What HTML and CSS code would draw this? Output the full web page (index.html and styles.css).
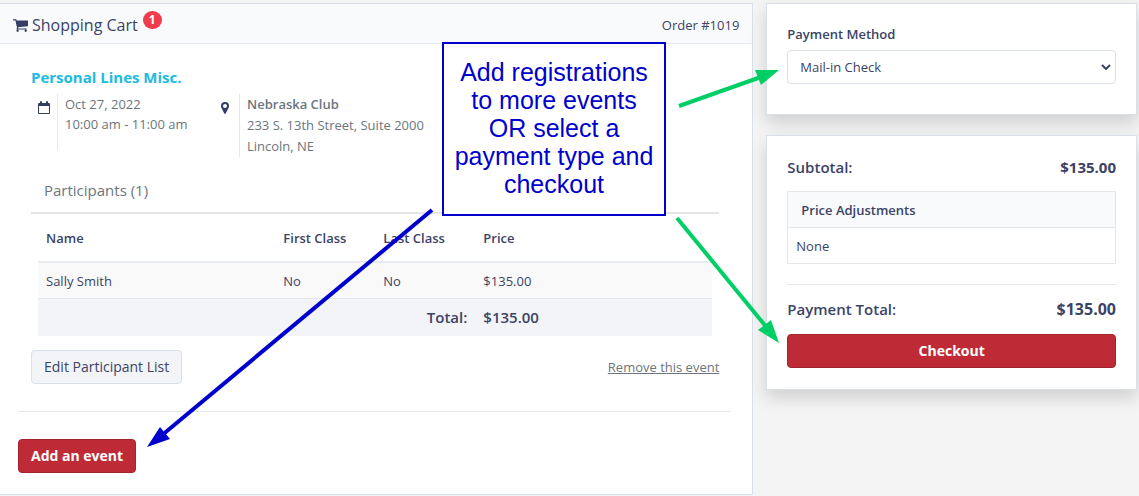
FILE: index.html
```html
<!DOCTYPE html>
<html lang="en">
<head>
  <meta charset="UTF-8" />
  <meta name="viewport" content="width=device-width, initial-scale=1.0" />
  <title>Shopping Cart</title>
  <link rel="stylesheet" href="styles.css">
</head>

<body>
  <div class="page">
    <main class="card cart">
      <header class="cart-header">
        <svg class="icon-cart" viewBox="0 0 1664 1536" aria-hidden="true">
          <path d="M640 1408q0 52-38 90t-90 38-90-38-38-90 38-90 90-38 90 38 38 90zm896 0q0 52-38 90t-90 38-90-38-38-90 38-90 90-38 90 38 38 90zm128-1088v512q0 24-16.500 42.500t-40.500 21.500l-1044 122q13 60 13 70 0 16-24 64h920q26 0 45 19t19 45-19 45-45 19H448q-26 0-45-19t-19-45q0-11 8-31.500t16-36 21.500-40T445 1080L268 256H64q-26 0-45-19T0 192t19-45 45-19h256q16 0 28.500 6.500T368 150t13 24.500 8 26 5.500 29.500 4.500 26h1201q26 0 45 19t19 45z"/>
        </svg>
        <h1>Shopping Cart</h1>
        <span class="badge">1</span>
        <span class="order">Order #1019</span>
      </header>

      <div class="cart-body">
        <section class="event">
          <h2>Personal Lines Misc.</h2>

          <div class="details">
            <div class="detail when">
              <svg class="icon-calendar" viewBox="0 0 12 13" aria-hidden="true">
                <path fill-rule="evenodd" d="M1 2h1V1q0-1 1-1t1 1v1h4V1q0-1 1-1t1 1v1h1q1 0 1 1v9q0 1-1 1H1q-1 0-1-1V3q0-1 1-1zM1 5v7h10V5z"/>
              </svg>
              <p>Oct 27, 2022<br>10:00 am - 11:00 am</p>
            </div>
            <div class="detail where">
              <svg class="icon-pin" viewBox="0 0 8 12" aria-hidden="true">
                <path fill-rule="evenodd" d="M4 0a4 4 0 0 1 4 4q0 1-.4 1.800L4.700 11.600q-.7.800-1.400 0L.4 5.800Q0 5 0 4a4 4 0 0 1 4-4zM4 2a2 2 0 1 0 0 4 2 2 0 0 0 0-4z"/>
              </svg>
              <p><strong>Nebraska Club</strong><br>233 S. 13th Street, Suite 2000<br>Lincoln, NE</p>
            </div>
          </div>

          <h3>Participants (1)</h3>

          <table class="participants">
            <thead>
              <tr>
                <th>Name</th>
                <th class="class-col">First Class</th>
                <th class="class-col">Last Class</th>
                <th class="price-col">Price</th>
              </tr>
            </thead>
            <tbody>
              <tr>
                <td>Sally Smith</td>
                <td>No</td>
                <td>No</td>
                <td>$135.00</td>
              </tr>
            </tbody>
            <tfoot>
              <tr>
                <td colspan="3" class="total-label">Total:</td>
                <td>$135.00</td>
              </tr>
            </tfoot>
          </table>

          <div class="event-actions">
            <button type="button" class="btn btn-light">Edit Participant List</button>
            <a href="#">Remove this event</a>
          </div>
        </section>

        <hr>
        <button type="button" class="btn btn-red">Add an event</button>
      </div>
    </main>

    <aside class="sidebar">
      <section class="card side-card payment">
        <label for="payment-method">Payment Method</label>
        <div class="select-wrap">
          <select id="payment-method">
            <option>Mail-in Check</option>
          </select>
          <svg class="icon-chevron" viewBox="0 0 10 6" aria-hidden="true">
            <path d="M1 1l4 4 4-4"/>
          </svg>
        </div>
      </section>

      <section class="card side-card summary">
        <div class="sum-row">
          <span>Subtotal:</span>
          <strong>$135.00</strong>
        </div>
        <table class="adjustments">
          <thead>
            <tr><th>Price Adjustments</th></tr>
          </thead>
          <tbody>
            <tr><td>None</td></tr>
          </tbody>
        </table>
        <hr>
        <div class="sum-row grand">
          <span>Payment Total:</span>
          <strong>$135.00</strong>
        </div>
        <button type="button" class="btn btn-red btn-block">Checkout</button>
      </section>
    </aside>

    <!-- help callout and arrows drawn over the page -->
    <svg class="arrows" width="1139" height="496" viewBox="0 0 1139 496" aria-hidden="true">
      <g class="arrow-blue">
        <path d="M432 210L161 436"/>
        <polygon points="147,447 160,427 170,439"/>
      </g>
      <g class="arrow-green">
        <path d="M679 106L761 77"/>
        <polygon points="779,70 755,70 761,85"/>
        <path d="M677 218L768 329"/>
        <polygon points="779,343 771,320 758,330"/>
      </g>
    </svg>
    <p class="callout">Add registrations to more events OR select a payment type and checkout</p>
  </div>
</body>
</html>
```

FILE: styles.css
```css
* {
  box-sizing: border-box;
}
body {
  margin: 0;
  background: #f4f4f4;
  color: #3b4366;
  font-family: "Open Sans", sans-serif;
  font-size: 13px;
  line-height: 20px;
}
h1, h2, h3, p {
  margin: 0;
}
svg {
  display: block;
  fill: #353d63;
}
hr {
  margin: 0;
  border: 0;
  border-top: 1px solid #e4e7ea;
}
table {
  border-collapse: collapse;
}
th {
  font-weight: 600;
  text-align: left;
}

.page {
  position: relative;
  display: flex;
  align-items: flex-start;
  gap: 13px;
  padding: 3px 2px 0 0;
}
.card {
  background: #fff;
  border: 1px solid #d9e0e8;
}

/* cart */
.cart {
  flex: 753;
  border-left: 0;
}
.cart-header {
  display: flex;
  align-items: center;
  height: 40px;
  padding: 2px 13px 0;
  background: #f9fafc;
  border-bottom: 1px solid #e8ebf2;
}
.icon-cart {
  width: 15px;
  height: 14px;
  margin-right: 4px;
}
.cart-header h1 {
  font-size: 16px;
  font-weight: 400;
}
.badge {
  width: 19px;
  height: 18px;
  margin: 0 auto 10px 5px;
  border-radius: 9px;
  background: #ef3d4d;
  color: #fff;
  font-size: 12px;
  font-weight: 700;
  line-height: 18px;
  text-align: center;
}
.cart-body {
  padding: 22px 21px 21px 18px;
}
.event {
  padding: 0 12px 27px 13px;
}
.event h2 {
  color: #20bbe0;
  font-size: 15px;
  font-weight: 700;
  line-height: 22px;
}
.details {
  display: flex;
  align-items: flex-start;
  margin-top: 6px;
  color: #6c757d;
  line-height: 21px;
}
.detail {
  display: flex;
  align-items: flex-start;
}
.detail p {
  padding-left: 7px;
  border-left: 1px solid #e4e6ea;
}
.detail strong {
  font-weight: 600;
}
.when {
  width: 190px;
  padding-left: 7px;
}
.when p {
  min-height: 56px;
  line-height: 20px;
}
.icon-calendar {
  width: 12px;
  height: 13px;
  margin: 7px 7px 0 0;
}
.icon-pin {
  width: 8px;
  height: 12px;
  margin: 8px 10px 0 0;
}
.event h3 {
  margin-top: 20px;
  padding: 3px 13px 12px;
  border-bottom: 2px solid #e4e6ea;
  color: #6c757d;
  font-size: 15px;
  font-weight: 400;
  line-height: 20px;
}
.participants {
  width: calc(100% - 14px);
  margin: 0 7px;
  table-layout: fixed;
}
.participants th,
.participants td {
  padding: 7px 8px;
}
.participants th {
  height: 48px;
  border-bottom: 2px solid #e8ebf2;
}
.class-col {
  width: 100px;
}
.price-col {
  width: 237px;
}
.participants tbody td {
  height: 36px;
  padding: 8px 8px 6px;
  background: #f9f9f9;
  border-bottom: 1px solid #e4e8ee;
}
.participants tfoot td {
  height: 38px;
  background: #f2f4f7;
  font-size: 15px;
  font-weight: 600;
}
.participants .total-label {
  text-align: right;
}
.event-actions {
  display: flex;
  align-items: center;
  justify-content: space-between;
  margin-top: 14px;
}
.event-actions a {
  color: #6c757d;
}
.btn {
  height: 34px;
  padding: 0 12px 2px;
  border: 1px solid;
  border-radius: 4px;
  font-family: inherit;
  font-size: 14px;
  cursor: pointer;
}
.btn-light {
  background: #f2f4f8;
  border-color: #d9e0ea;
  color: #3b4366;
}
.btn-red {
  background: #be2b37;
  border-color: #a1242f;
  color: #fff;
  font-weight: 700;
}
.cart-body > .btn-red {
  display: block;
  margin-top: 27px;
}
.btn-block {
  display: block;
  width: 100%;
}

/* sidebar */
.sidebar {
  flex: 371;
}
.side-card {
  padding: 20px;
  box-shadow: 0 8px 16px rgba(0, 0, 0, 0.15);
}
.payment {
  margin-bottom: 20px;
  padding-bottom: 30px;
}
.payment label {
  display: block;
  margin-bottom: 6px;
  font-weight: 600;
}
.select-wrap {
  display: grid;
  align-items: center;
}
.select-wrap > * {
  grid-area: 1 / 1;
}
.payment select {
  width: 100%;
  height: 34px;
  padding: 0 12px;
  appearance: none;
  background: #fff;
  border: 1px solid #d9e0e8;
  border-radius: 4px;
  color: inherit;
  font: inherit;
}
.icon-chevron {
  width: 10px;
  height: 6px;
  justify-self: end;
  margin-right: 5px;
  fill: none;
  stroke: #3b4366;
  stroke-width: 2;
  pointer-events: none;
}
.summary {
  padding-bottom: 21px;
}
.sum-row {
  display: flex;
  justify-content: space-between;
  font-size: 15px;
  font-weight: 600;
  line-height: 22px;
}
.sum-row strong {
  font-weight: 700;
}
.grand strong {
  font-size: 16px;
}
.adjustments {
  width: 100%;
  margin: 13px 0 20px;
}
.adjustments th,
.adjustments td {
  height: 36px;
  padding: 0 8px;
  border: 1px solid #e4e7ea;
}
.adjustments th {
  padding: 0 13px;
  background: #f9fafc;
}
.summary .grand {
  margin: 13px 0 14px;
}

/* callout */
.callout {
  position: absolute;
  top: 42px;
  left: 442px;
  width: 224px;
  padding: 14px 8px 16px;
  border: 2px solid #0000cd;
  background: #fff;
  color: #0000cd;
  font-family: "Liberation Sans", Arial, sans-serif;
  font-size: 25px;
  line-height: 28px;
  text-align: center;
}
.arrows {
  position: absolute;
  top: 0;
  left: 0;
  pointer-events: none;
}
.arrows path {
  stroke-width: 4;
}
.arrow-blue {
  fill: #0000cd;
  stroke: #0000cd;
}
.arrow-green {
  fill: #00cf66;
  stroke: #00cf66;
}
.arrows polygon {
  stroke: none;
}
```
